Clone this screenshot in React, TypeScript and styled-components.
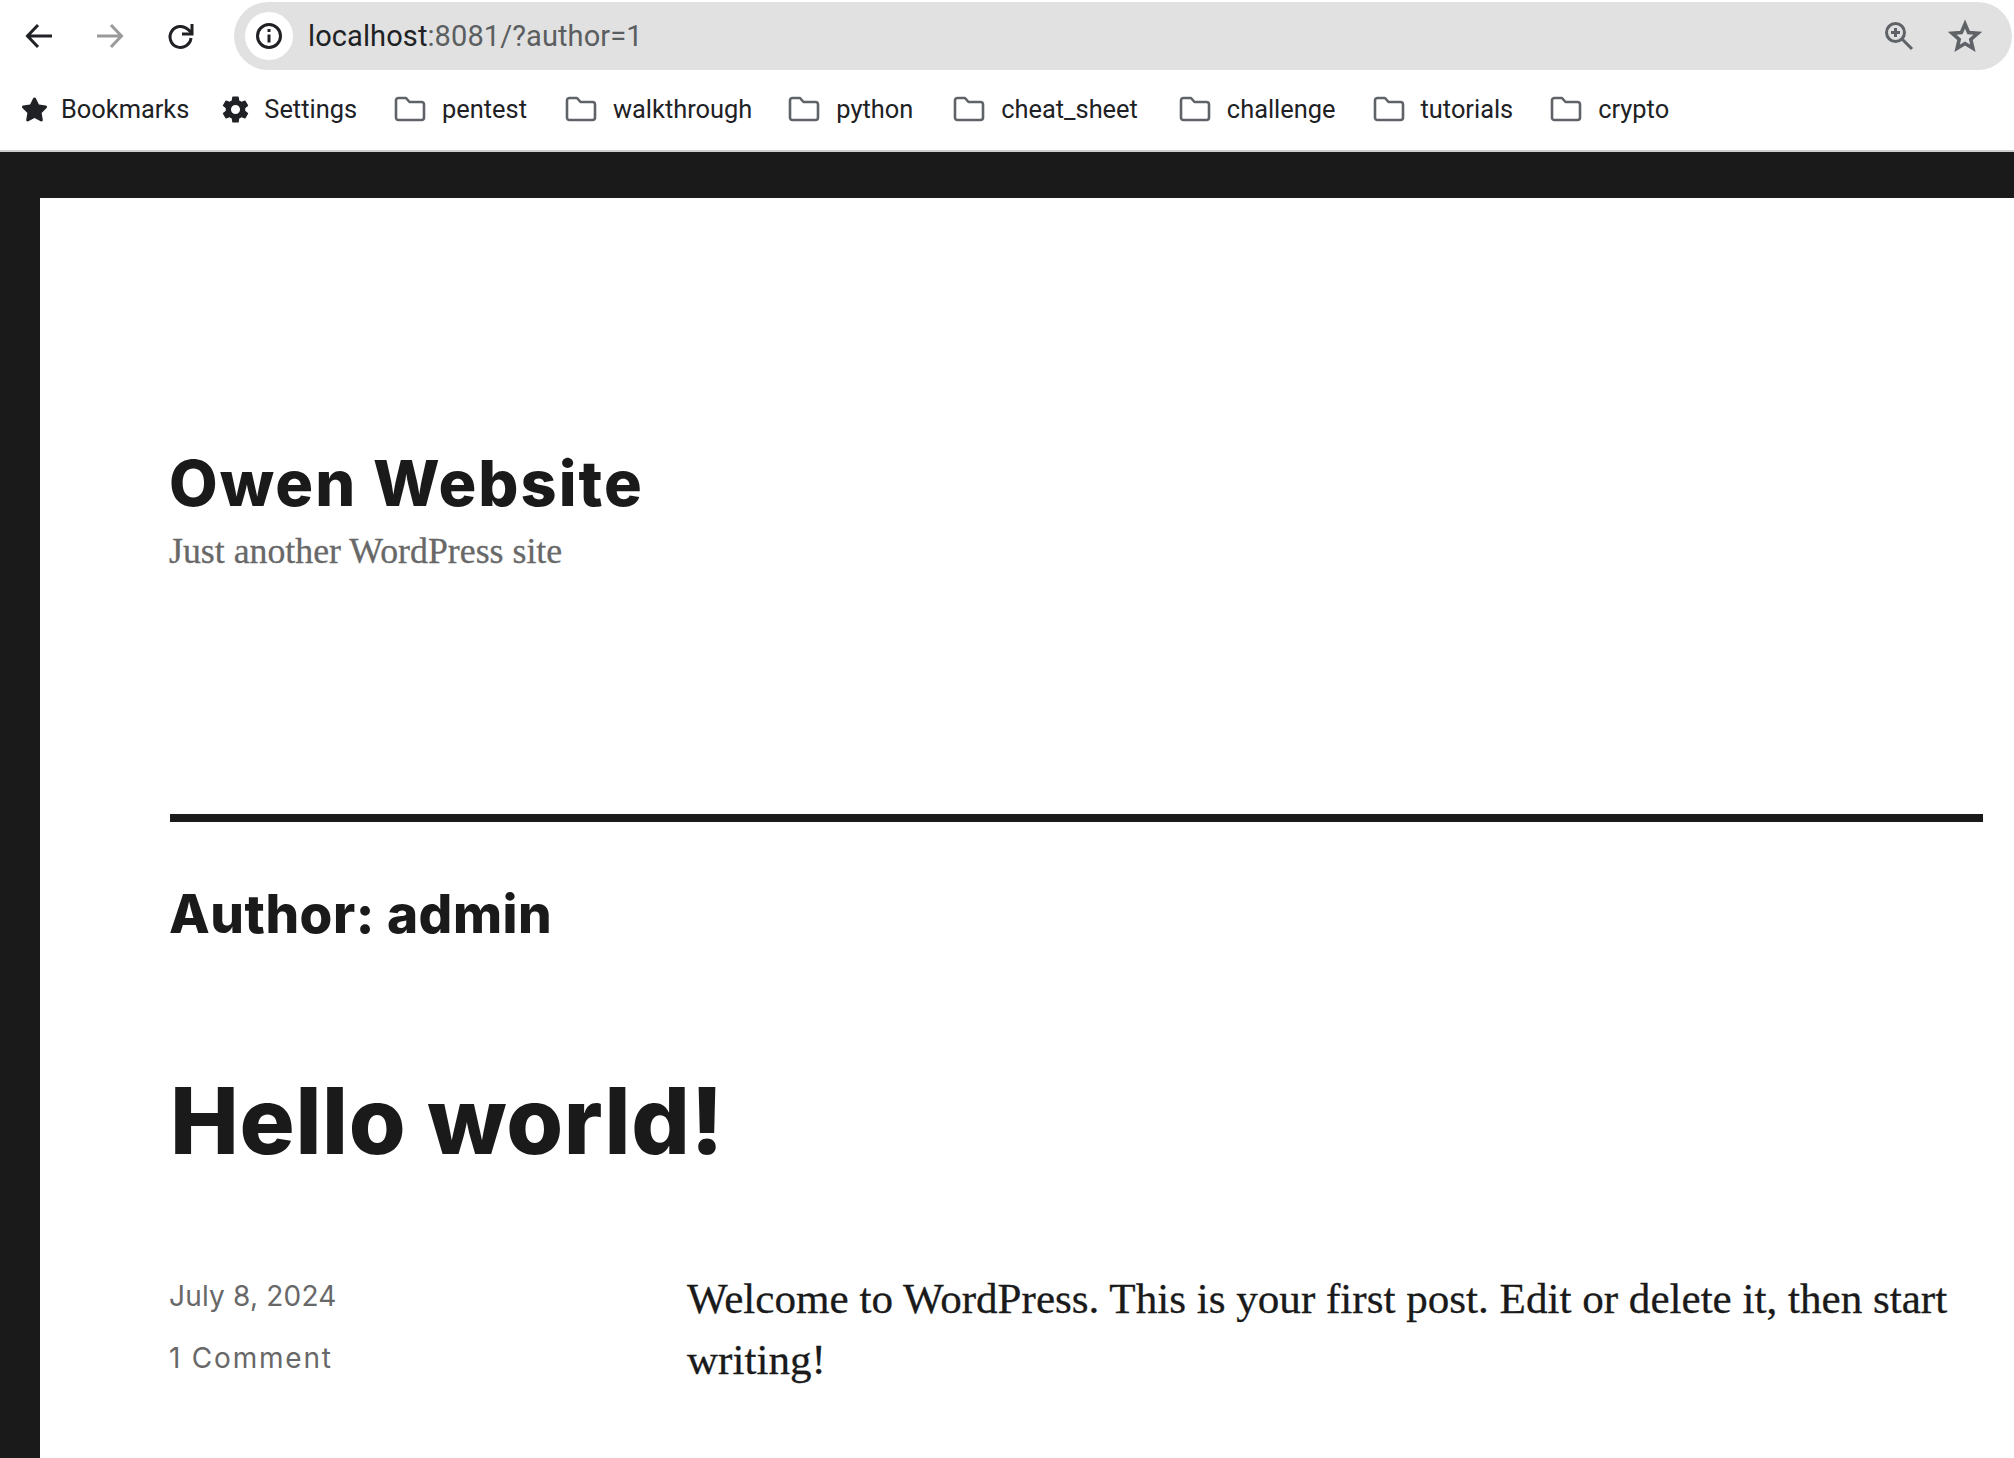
import React from "react";
import styled, { createGlobalStyle } from "styled-components";
import { FaStar } from "react-icons/fa";
import { IoSettingsSharp } from "react-icons/io5";

const GlobalStyle = createGlobalStyle`
  html, body {
    margin: 0;
    padding: 0;
    background: #fff;
    overflow: hidden;
  }
`;

const Page = styled.div`
  width: 2014px;
  height: 1458px;
  overflow: hidden;
  display: flex;
  flex-direction: column;
  font-family: "Roboto", "Liberation Sans", sans-serif;
`;

const Toolbar = styled.div`
  height: 70px;
  flex: none;
  display: flex;
  align-items: flex-start;
  padding: 2px 2px 0 22px;
  box-sizing: border-box;
`;

const NavButton = styled.div<{ $mr: number }>`
  width: 34px;
  height: 68px;
  display: flex;
  align-items: center;
  justify-content: center;
  margin-right: ${(p) => p.$mr}px;
`;

const Omnibox = styled.div`
  flex: 1;
  height: 68px;
  border-radius: 34px;
  background: #e1e1e1;
  display: flex;
  align-items: center;
  padding: 0 30px 0 11px;
`;

const InfoChip = styled.div`
  width: 48px;
  height: 48px;
  border-radius: 50%;
  background: #fff;
  display: flex;
  align-items: center;
  justify-content: center;
  margin-right: 15px;
`;

const Url = styled.div`
  flex: 1;
  font-size: 29px;
  letter-spacing: 0.1px;
  color: #5b5e60;
`;

const Host = styled.span`
  color: #202124;
`;

const OmniIcon = styled.div<{ $mr: number }>`
  display: flex;
  margin-right: ${(p) => p.$mr}px;
`;

const BookmarkBar = styled.div`
  height: 80px;
  flex: none;
  display: flex;
  align-items: center;
  padding: 0 0 2px 21px;
  box-sizing: border-box;
`;

const Bookmark = styled.div<{ $gap: number }>`
  display: flex;
  align-items: center;
  font-size: 25.4px;
  color: #202124;
  margin-right: ${(p) => p.$gap}px;
`;

const BookmarkIcon = styled.span<{ $w: number }>`
  display: flex;
  width: ${(p) => p.$w}px;
`;

const Divider = styled.div`
  height: 2px;
  flex: none;
  background: #cfcfcf;
`;

const Frame = styled.div`
  flex: 1;
  background: #1a1a1a;
  padding: 46px 0 0 40px;
  min-height: 0;
`;

const Sheet = styled.main`
  height: 100%;
  background: #fff;
  padding: 0 31px 0 130px;
`;

const SiteHeader = styled.header`
  padding-top: 246px;
  height: 370px;
  box-sizing: content-box;
`;

const SiteTitle = styled.h1`
  margin: 0 0 0 -1px;
  font-family: "Inter", sans-serif;
  font-weight: 800;
  font-size: 63px;
  letter-spacing: 2px;
  line-height: 78px;
  color: #1a1a1a;
`;

const Tagline = styled.p`
  margin: 7px 0 0 -1px;
  font-family: "Liberation Serif", serif;
  font-size: 35.8px;
  line-height: 44px;
  -webkit-text-stroke: 0.3px #686868;
  color: #686868;
`;

const ArchiveHeader = styled.div`
  border-top: 8px solid #1a1a1a;
`;

const ArchiveTitle = styled.h2`
  margin: 59px 0 0 -1px;
  font-family: "Inter", sans-serif;
  font-weight: 800;
  font-size: 53px;
  letter-spacing: 0.5px;
  line-height: 66px;
  color: #1a1a1a;
`;

const PostTitle = styled.h2`
  margin: 119px 0 0;
  font-family: "Inter", sans-serif;
  font-weight: 800;
  font-size: 92px;
  letter-spacing: 0.65px;
  line-height: 110px;
  color: #1a1a1a;
`;

const Post = styled.article`
  display: grid;
  grid-template-columns: 517px 1fr;
  margin-top: 89px;
`;

const MetaLine = styled.div<{ $spacing: number }>`
  margin-left: -1px;
  font-family: "Inter", sans-serif;
  font-size: 28px;
  line-height: 62px;
  letter-spacing: ${(p) => p.$spacing}px;
  color: #686868;
`;

const Body = styled.div`
  padding-top: 3px;
  font-family: "Liberation Serif", serif;
  font-size: 43.1px;
  line-height: 61px;
  -webkit-text-stroke: 0.3px #1a1a1a;
  color: #1a1a1a;
`;

const FolderIcon = () => (
  <svg width="32" height="26" viewBox="0 0 32 26" fill="none">
    <path
      d="M2 4.5C2 3 3 2 4.5 2h7.5l3.5 4h12C29 6 30 7 30 8.5v13c0 1.500-1 2.500-2.500 2.500h-23C3 24 2 23 2 21.500z"
      stroke="#5f6368"
      strokeWidth="2.600"
      strokeLinejoin="round"
    />
  </svg>
);

const folders: { name: string; gap: number }[] = [
  { name: "pentest", gap: 38 },
  { name: "walkthrough", gap: 36 },
  { name: "python", gap: 40 },
  { name: "cheat_sheet", gap: 41 },
  { name: "challenge", gap: 37 },
  { name: "tutorials", gap: 37 },
  { name: "crypto", gap: 0 },
];

export default function App() {
  return (
    <Page>
      <GlobalStyle />
      <Toolbar>
        <NavButton $mr={37}>
          <svg width="30" height="30" viewBox="0 0 30 30" fill="none" stroke="#202124" strokeWidth="3">
            <path d="M28 15H4M14 4L3.500 15 14 26" />
          </svg>
        </NavButton>
        <NavButton $mr={37}>
          <svg width="30" height="30" viewBox="0 0 30 30" fill="none" stroke="#9a9a9a" strokeWidth="3">
            <path d="M2 15h24M16 4l10.500 11L16 26" />
          </svg>
        </NavButton>
        <NavButton $mr={36}>
          <svg width="30" height="30" viewBox="0 0 30 30" fill="none" stroke="#202124" strokeWidth="3">
            <path d="M25 17a10.500 10.500 0 1 1-3-8.500L26 12" />
            <path d="M26 3v10H16" fill="none" />
          </svg>
        </NavButton>
        <Omnibox>
          <InfoChip>
            <svg width="28" height="28" viewBox="0 0 28 28" fill="none" stroke="#202124" strokeWidth="3">
              <circle cx="14" cy="14" r="11.500" />
              <path d="M14 12.500v8M14 7v3" />
            </svg>
          </InfoChip>
          <Url>
            <Host>localhost</Host>:8081/?author=1
          </Url>
          <OmniIcon $mr={34}>
            <svg width="30" height="30" viewBox="0 0 30 30" fill="none" stroke="#5f6368" strokeWidth="3">
              <circle cx="11.500" cy="11.500" r="9" />
              <path d="M18 18l10 10M11.500 7v9M7 11.500h9" />
            </svg>
          </OmniIcon>
          <OmniIcon $mr={0}>
            <svg width="34" height="34" viewBox="0 0 34 34" fill="none" stroke="#5f6368" strokeWidth="3.600">
              <path d="M17 5l3.600 8.500 9.200.8-7 6 2.100 9L17 24.500 9.100 29.300l2.100-9-7-6 9.200-.8z" />
            </svg>
          </OmniIcon>
        </Omnibox>
      </Toolbar>
      <BookmarkBar>
        <Bookmark $gap={32}>
          <BookmarkIcon $w={40}>
            <FaStar size={27} color="#202124" />
          </BookmarkIcon>
          Bookmarks
        </Bookmark>
        <Bookmark $gap={37}>
          <BookmarkIcon $w={43}>
            <IoSettingsSharp size={29} color="#202124" />
          </BookmarkIcon>
          Settings
        </Bookmark>
        {folders.map((f) => (
          <Bookmark key={f.name} $gap={f.gap}>
            <BookmarkIcon $w={48}>
              <FolderIcon />
            </BookmarkIcon>
            {f.name}
          </Bookmark>
        ))}
      </BookmarkBar>
      <Divider />
      <Frame>
        <Sheet>
          <SiteHeader>
            <SiteTitle>Owen Website</SiteTitle>
            <Tagline>Just another WordPress site</Tagline>
          </SiteHeader>
          <ArchiveHeader>
            <ArchiveTitle>Author: admin</ArchiveTitle>
          </ArchiveHeader>
          <PostTitle>Hello world!</PostTitle>
          <Post>
            <div>
              <MetaLine $spacing={0.2}>July 8, 2024</MetaLine>
              <MetaLine $spacing={1.8}>1 Comment</MetaLine>
            </div>
            <Body>
              Welcome to WordPress. This is your first post. Edit or delete it, then start writing!
            </Body>
          </Post>
        </Sheet>
      </Frame>
    </Page>
  );
}
